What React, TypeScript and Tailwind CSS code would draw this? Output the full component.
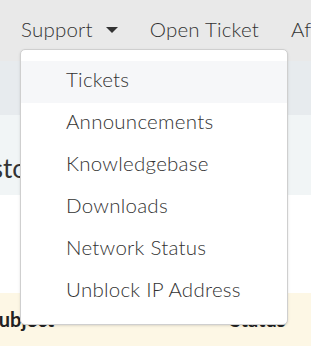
const menu = [
  'Tickets',
  'Announcements',
  'Knowledgebase',
  'Downloads',
  'Network Status',
  'Unblock IP Address',
];

export default function App() {
  return (
    <div className="relative w-[311px] h-[346px] overflow-hidden bg-white text-[#333] font-['Lato',sans-serif] font-light">
      <nav className="h-[61px] bg-[#e9e9e9] flex items-center gap-[32px] pl-[21px] pb-[2px] text-[20.5px] tracking-[0.2px] whitespace-nowrap">
        <span className="flex items-center gap-[13px]">
          Support
          <span className="w-0 h-0 border-x-[6px] border-x-transparent border-t-[6px] border-t-[#333]" />
        </span>
        <span>Open Ticket</span>
        <span>Affiliates</span>
      </nav>
      <div className="h-[54px] bg-[#e7ebee]" />
      <div className="h-[80px] bg-[#f1f5f6] flex items-center pt-[26px] overflow-hidden">
        <h1 className="-ml-[40px] text-[26px] font-normal whitespace-nowrap">Customer</h1>
      </div>
      <div className="h-[98px]" />
      <div className="h-[53px] bg-[#fdf7e5] flex items-start pt-[16px] overflow-hidden whitespace-nowrap font-bold text-[20px] leading-none text-[#222]">
        <span className="-ml-[12px] w-[242px]">Subject</span>
        <span>Status</span>
      </div>

      <div className="absolute left-[20px] top-[49px] w-[268px] rounded-[5px] border border-[#cfcfcf] bg-white py-[11px] shadow-sm">
        {menu.map((item, i) => (
          <div
            key={item}
            className={`h-[42px] flex items-center pl-[45px] pb-[6px] text-[20.5px] tracking-[0.25px] ${i === 0 ? 'bg-[#f6f7f9]' : ''}`}
          >
            {item}
          </div>
        ))}
      </div>
    </div>
  );
}
